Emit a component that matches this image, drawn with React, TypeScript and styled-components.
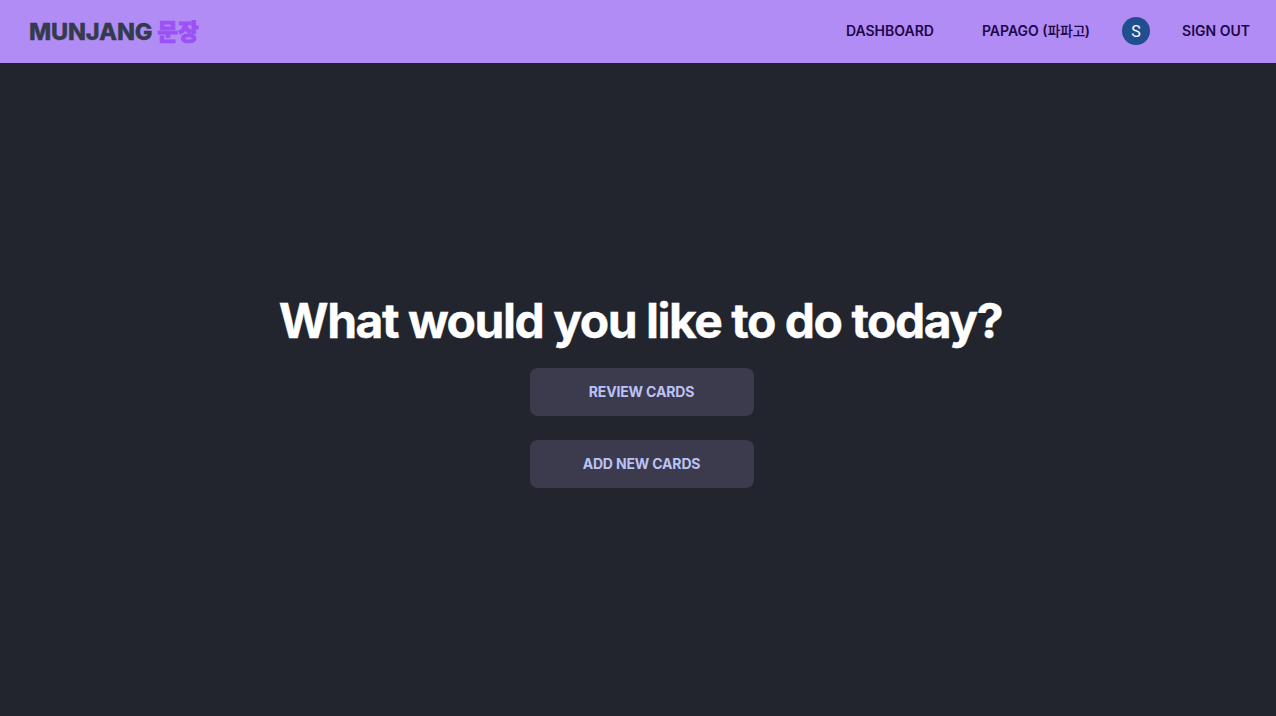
import React from 'react';
import styled, { createGlobalStyle } from 'styled-components';

const GlobalStyle = createGlobalStyle`
  * { box-sizing: border-box; }
  body {
    margin: 0;
    background: #23252e;
    font-family: Inter, "Noto Sans CJK KR", sans-serif;
    -webkit-font-smoothing: antialiased;
  }
  #root { min-height: 100vh; display: flex; flex-direction: column; }
`;

const Navbar = styled.header`
  display: flex;
  align-items: center;
  justify-content: space-between;
  height: 63px;
  padding: 0 26px 1px 29px;
  background: #b18cf5;
`;

const Brand = styled.a`
  display: flex;
  align-items: center;
  gap: 5px;
  font-size: 23.5px;
  line-height: 32px;
  font-weight: 800;
  letter-spacing: -0.15px;
  color: #343b4c;
  white-space: nowrap;
`;

const BrandName = styled.span`
  padding-top: 1px;
  -webkit-text-stroke: 0.3px currentColor;
`;

const BrandAccent = styled.span`
  padding-bottom: 3px;
  font-family: "Noto Sans CJK KR", sans-serif;
  font-size: 22.5px;
  font-weight: 900;
  letter-spacing: 0;
  color: #9b51f5;
  -webkit-text-stroke: 0.8px currentColor;
`;

const Nav = styled.nav`
  display: flex;
  align-items: center;
`;

const NavLink = styled.a<{ $gap?: number }>`
  margin-left: ${(p) => p.$gap ?? 0}px;
  font-size: 14px;
  line-height: 20px;
  font-weight: 600;
  color: #200748;
  white-space: nowrap;
`;

const Korean = styled.span`
  font-family: "Noto Sans CJK KR", sans-serif;
  font-size: 14px;
  font-weight: 500;
  line-height: 1;
  letter-spacing: -0.45px;
`;

const Avatar = styled.span`
  display: flex;
  align-items: center;
  justify-content: center;
  width: 28px;
  height: 28px;
  margin-left: 32px;
  border-radius: 50%;
  background: #204e8f;
  color: #fff;
  font: 400 16px Roboto, sans-serif;
`;

const Hero = styled.main`
  flex: 1;
  display: flex;
  flex-direction: column;
  align-items: center;
  padding: 234px 0 0 7px;
`;

const Title = styled.h1`
  margin: 0 2px 23px 0;
  font-size: 48px;
  line-height: 48px;
  font-weight: 700;
  letter-spacing: -1.48px;
  color: #fff;
  white-space: nowrap;
  -webkit-text-stroke: 0.4px currentColor;
`;

const Action = styled.button`
  width: 224px;
  height: 48px;
  margin: 0 0 24px;
  padding: 0 0 2px;
  border: 0;
  border-radius: 8px;
  background: #3b3b4d;
  color: #bcc2f5;
  font-family: inherit;
  font-size: 14px;
  font-weight: 700;
  letter-spacing: -0.17px;
`;

export default function App() {
  return (
    <>
      <GlobalStyle />
      <Navbar>
        <Brand>
          <BrandName>MUNJANG</BrandName>
          <BrandAccent>문장</BrandAccent>
        </Brand>
        <Nav>
          <NavLink>DASHBOARD</NavLink>
          <NavLink $gap={48}>PAPAGO (<Korean>파파고</Korean>)</NavLink>
          <Avatar>S</Avatar>
          <NavLink $gap={32}>SIGN OUT</NavLink>
        </Nav>
      </Navbar>
      <Hero>
        <Title>What would you like to do today?</Title>
        <Action>REVIEW CARDS</Action>
        <Action>ADD NEW CARDS</Action>
      </Hero>
    </>
  );
}
